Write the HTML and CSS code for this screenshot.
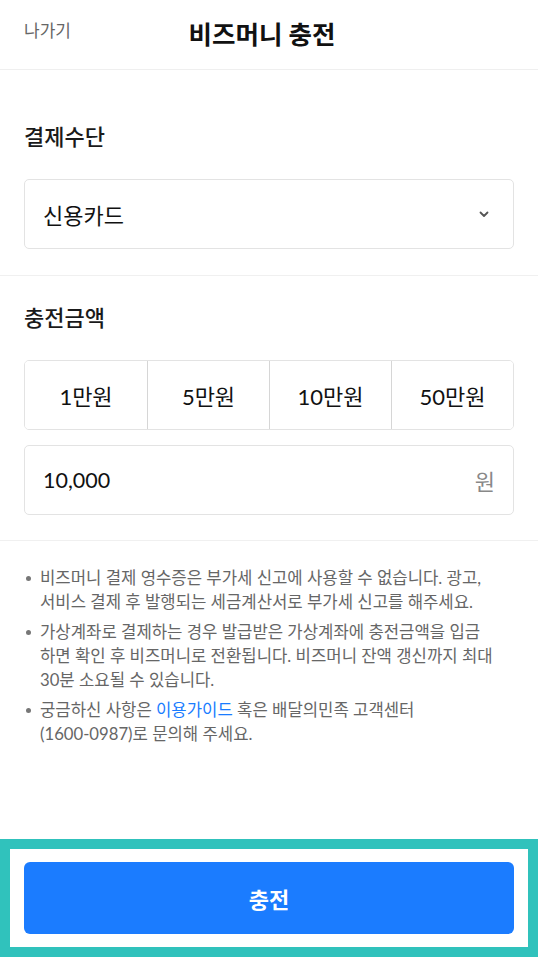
FILE: index.html
```html
<!DOCTYPE html>
<html lang="ko">
<head>
    <meta charset="UTF-8">
    <meta name="viewport" content="width=device-width, initial-scale=1.0">
    <title>비즈머니 충전</title>
    <link rel="stylesheet" href="styles.css">
</head>
<body>
    <div class="page">
        <header class="topbar">
            <a class="back" href="#">나가기</a>
            <h1>비즈머니 충전</h1>
            <span></span>
        </header>

        <section class="block pay">
            <h2>결제수단</h2>
            <div class="select">
                <span>신용카드</span>
                <svg class="chevron" width="10" height="7" viewBox="0 0 10 7">
                    <path d="M1.5 1.5 L5 5 L8.5 1.5" fill="none" stroke="#555" stroke-width="1.8" stroke-linecap="round" stroke-linejoin="round"/>
                </svg>
            </div>
        </section>

        <section class="block amount">
            <h2>충전금액</h2>
            <div class="presets">
                <button>1만원</button>
                <button>5만원</button>
                <button>10만원</button>
                <button>50만원</button>
            </div>
            <div class="amount-input">
                <span class="value">10,000</span>
                <span class="unit">원</span>
            </div>
        </section>

        <ul class="notes">
            <li>비즈머니 결제 영수증은 부가세 신고에 사용할 수 없습니다. 광고,<br>서비스 결제 후 발행되는 세금계산서로 부가세 신고를 해주세요.</li>
            <li>가상계좌로 결제하는 경우 발급받은 가상계좌에 충전금액을 입금<br>하면 확인 후 비즈머니로 전환됩니다. 비즈머니 잔액 갱신까지 최대<br>30분 소요될 수 있습니다.</li>
            <li>궁금하신 사항은 <a href="#">이용가이드</a> 혹은 배달의민족 고객센터<br>(1600-0987)로 문의해 주세요.</li>
        </ul>

        <footer class="footer">
            <button class="submit">충전</button>
        </footer>
    </div>
</body>
</html>
```

FILE: styles.css
```css
* {
    box-sizing: border-box;
}

body {
    margin: 0;
    background: #fff;
    color: #111;
    font-family: Lato, "Noto Sans CJK KR", sans-serif;
}

.page {
    display: flex;
    flex-direction: column;
    min-height: 100vh;
}

.topbar {
    display: grid;
    grid-template-columns: 1fr auto 1fr;
    align-items: center;
    height: 70px;
    padding: 0 38px 4px 24px;
    border-bottom: 1px solid #efefef;
}

.back {
    color: #666;
    font-size: 17px;
    text-decoration: none;
    margin-top: -6px;
}

.topbar h1 {
    margin: 0;
    font-size: 25.5px;
    font-weight: 700;
}

.block {
    padding: 0 24px;
    border-bottom: 1px solid #f0f0f0;
}

.block h2 {
    margin: 0;
    font-size: 22px;
    font-weight: 500;
    line-height: 30px;
    color: #1a1a1a;
}

.pay {
    padding-top: 52px;
    padding-bottom: 26px;
}

.amount {
    padding-top: 27px;
    padding-bottom: 25px;
}

.select {
    display: flex;
    justify-content: space-between;
    align-items: center;
    height: 70px;
    margin-top: 27px;
    padding: 0 24px 0 18px;
    border: 1px solid #e3e3e3;
    border-radius: 5px;
    font-size: 22px;
}

.presets {
    display: grid;
    grid-template-columns: repeat(4, 1fr);
    height: 70px;
    margin-top: 27px;
    border: 1px solid #e3e3e3;
    border-radius: 5px;
    overflow: hidden;
}

.presets button {
    border: 0;
    border-left: 1px solid #d6d6d6;
    background: #fff;
    color: #111;
    font: inherit;
    font-size: 22px;
}

.presets button:first-child {
    border-left: 0;
}

.amount-input {
    display: flex;
    justify-content: space-between;
    align-items: center;
    height: 70px;
    margin-top: 15px;
    padding: 0 18px;
    border: 1px solid #e3e3e3;
    border-radius: 5px;
    font-size: 21.5px;
}

.unit {
    color: #888;
    font-size: 22px;
}

.notes {
    margin: 0;
    padding: 25px 20px 0 40px;
    list-style: none;
    color: #666;
    font-size: 16.7px;
    line-height: 24px;
    word-break: keep-all;
}

.notes li {
    position: relative;
    margin-bottom: 6px;
}

.notes li::before {
    content: "";
    position: absolute;
    left: -14px;
    top: 10px;
    width: 5px;
    height: 5px;
    border-radius: 50%;
    background: #777;
}

.notes a {
    color: #1a7cff;
    text-decoration: none;
}

.footer {
    margin-top: auto;
    padding: 13px 14px;
    border: 10px solid #30c2bc;
}

.submit {
    display: block;
    width: 100%;
    height: 72px;
    border: 0;
    border-radius: 6px;
    background: #1b7cff;
    color: #fff;
    font: inherit;
    font-size: 22px;
    font-weight: 700;
}
```
